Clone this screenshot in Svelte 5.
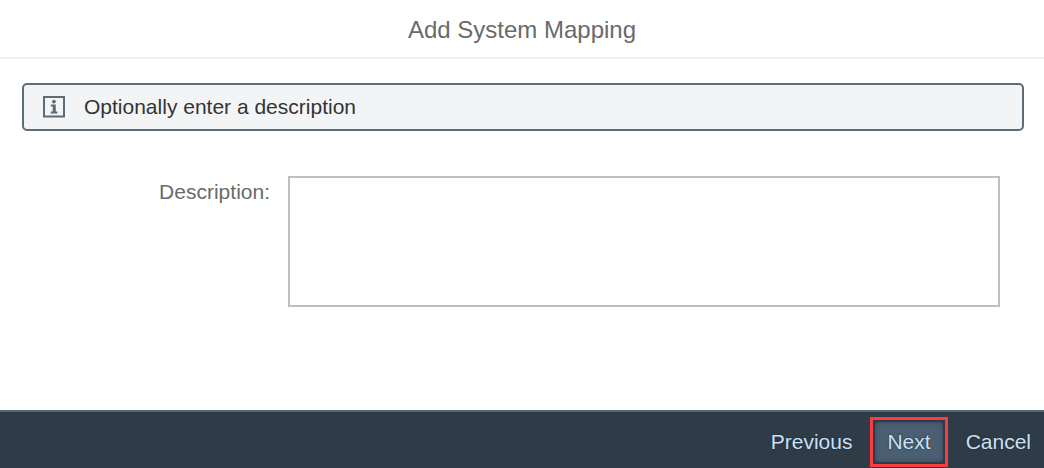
<script>
  let description = $state('');
</script>

<div class="dialog" role="dialog" aria-labelledby="title">
  <header>
    <h1 id="title">Add System Mapping</h1>
  </header>
  <main>
    <div class="strip">
      <svg width="22" height="22" viewBox="0 0 22 22" aria-hidden="true">
        <rect x="1" y="1" width="20" height="19.500" fill="none" stroke="#5e6d75" stroke-width="2" />
        <circle cx="10.900" cy="5.600" r="1.900" fill="#5e6d75" />
        <path d="M7.800 8.500h5v7H14.500V17.500H7.800v-2h1.900v-5H7.800z" fill="#5e6d75" />
      </svg>
      <span>Optionally enter a description</span>
    </div>
    <div class="field">
      <label for="description">Description:</label>
      <textarea id="description" bind:value={description}></textarea>
    </div>
  </main>
  <footer>
    <button type="button">Previous</button>
    <div class="highlight"><button type="button" class="primary">Next</button></div>
    <button type="button">Cancel</button>
  </footer>
</div>

<style>
  :global(body) {
    margin: 0;
  }
  .dialog {
    min-height: 100vh;
    display: flex;
    flex-direction: column;
    background: #fff;
    font-family: "Liberation Sans", Arial, sans-serif;
    font-size: 21px;
    color: #333;
  }
  header {
    padding: 16px 0 13px;
    border-bottom: 2px solid #f2f2f2;
    text-align: center;
  }
  h1 {
    margin: 0;
    font-size: 24px;
    line-height: 28px;
    font-weight: 400;
    color: #6a6a6a;
  }
  main {
    flex: 1;
    padding: 24px 20px 24px 22px;
  }
  .strip {
    display: flex;
    align-items: center;
    gap: 19px;
    padding: 10px 19px;
    border: 2px solid #5e6d75;
    border-radius: 5px;
    background: #f3f4f6;
    line-height: 24px;
  }
  .field {
    display: grid;
    grid-template-columns: 248px 1fr;
    gap: 18px;
    margin-top: 45px;
    padding-right: 24px;
  }
  label {
    padding-top: 4px;
    line-height: 24px;
    text-align: right;
    color: #6a6a6a;
  }
  textarea {
    display: block;
    box-sizing: border-box;
    width: 100%;
    height: 131px;
    padding: 8px;
    border: 2px solid #bfbfbf;
    border-radius: 0;
    background: #fff;
    font: inherit;
    resize: none;
  }
  footer {
    display: flex;
    justify-content: flex-end;
    align-items: center;
    padding: 5px 0 1px;
    border-top: 2px solid #526a78;
    background: #2f3c48;
  }
  button {
    height: 40px;
    padding: 0 13px;
    border: 0;
    background: transparent;
    font: inherit;
    color: #c9e0f7;
    text-shadow: 0 0 2px #1c2630;
  }
  .highlight {
    display: flex;
    margin: 0 5px;
    padding: 2px;
    border: 3px solid #fb3d3f;
  }
  .primary {
    padding: 0 12px;
    border-radius: 4px;
    background: #4a5f72;
    box-shadow: inset 0 0 4px #35475a;
  }
</style>
